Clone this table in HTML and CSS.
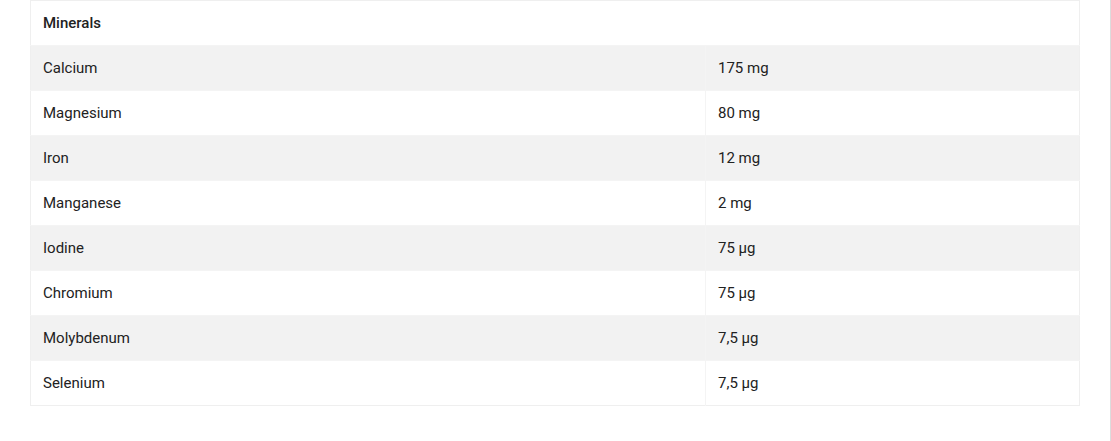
FILE: index.html
```html
<!DOCTYPE html>
<html lang="en">
<head>
  <meta charset="UTF-8" />
  <title>Minerals</title>
  <link rel="stylesheet" href="styles.css">
</head>
<body>

  <div class="page">
    <table class="facts">
      <thead>
        <tr>
          <th colspan="2">Minerals</th>
        </tr>
      </thead>
      <tbody>
        <tr><td>Calcium</td><td>175 mg</td></tr>
        <tr><td>Magnesium</td><td>80 mg</td></tr>
        <tr><td>Iron</td><td>12 mg</td></tr>
        <tr><td>Manganese</td><td>2 mg</td></tr>
        <tr><td>Iodine</td><td>75 µg</td></tr>
        <tr><td>Chromium</td><td>75 µg</td></tr>
        <tr><td>Molybdenum</td><td>7,5 µg</td></tr>
        <tr><td>Selenium</td><td>7,5 µg</td></tr>
      </tbody>
    </table>
  </div>

</body>
</html>
```

FILE: styles.css
```css
body {
  margin: 0;
  font-family: Roboto, 'Liberation Sans', sans-serif;
  color: #222;
  background: #fff;
}
.page {
  box-sizing: border-box;
  min-height: 100vh;
  padding: 0 30px;
  border-right: 1px solid #dcdcdc;
}
.facts {
  width: 1050px;
  border-collapse: collapse;
  border: 1px solid #efefef;
  font-size: 15px;
  line-height: 20px;
}
.facts th {
  text-align: left;
  font-weight: 500;
  padding: 12px;
  height: 20px;
}
.facts td {
  padding: 12px;
  height: 20px;
  border-top: 1px solid #f4f4f4;
}
.facts td:first-child {
  width: 650px;
  border-right: 1px solid #f4f4f4;
}
.facts tbody tr:nth-child(odd) {
  background: #f2f2f2;
}
```
